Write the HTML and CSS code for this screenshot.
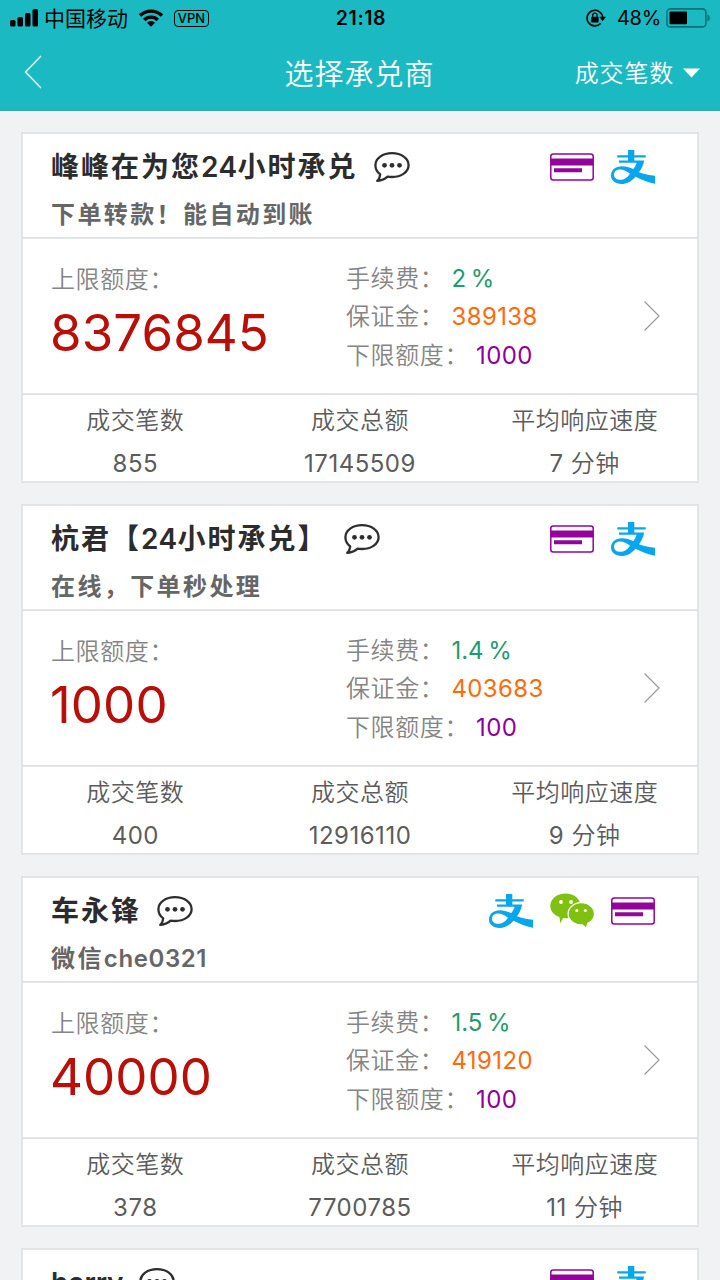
FILE: index.html
```html
<!DOCTYPE html>
<html lang="zh-CN">
<head>
<meta charset="utf-8">
<meta name="viewport" content="width=720">
<title>选择承兑商</title>
<link rel="stylesheet" href="styles.css">
</head>
<body>
<svg class="defs" width="0" height="0" aria-hidden="true">
  <symbol id="chat" viewBox="0 0 36 30">
    <path d="M18 1.2C27.3 1.2 34.6 6.5 34.6 13.2S27.3 25 18 25c-1.500 0-3-.1-4.400-.4C11 27 7.500 28.500 3.300 28.900c1.700-1.700 2.700-3.900 2.900-6.600C3.200 20 1.400 16.800 1.400 13.200 1.400 6.500 8.700 1.200 18 1.200Z" fill="none" stroke="#2e2e2e" stroke-width="2.300" stroke-linejoin="round"/>
    <circle cx="10.500" cy="13.300" r="2.400" fill="#2e2e2e"/><circle cx="18" cy="13.300" r="2.400" fill="#2e2e2e"/><circle cx="25.500" cy="13.300" r="2.400" fill="#2e2e2e"/>
  </symbol>
  <symbol id="card" viewBox="0 0 44 36">
    <rect x=".8" y="4.900" width="42.400" height="26" rx="2.500" fill="#fff" stroke="#93049b" stroke-width="1.500"/>
    <path d="M1 9.500h42v7H1zM4 19.200h28v4H4z" fill="#93049b"/>
  </symbol>
  <symbol id="alipay" viewBox="0 0 44 36">
    <path fill="#08a6ed" d="M17 1h6.300v5.300H34.700v2.200H23.300v2.900h9.900c-1 4.800-2.700 8.500-5.200 11.800 5 2 10.200 3 16 3.500v8C36.500 33.500 30 30.500 24.500 27.700 20.500 32.400 15.600 35 10.500 35 4.200 35 0 31.400 0 26.500c0-5.700 4.600-9.300 10.800-9.300 4.300 0 7.900 1.300 11.600 2.900 1.500-1.900 2.600-4 3.300-6.300H8v-2.400h9V8.500H6.300V6.300H17ZM19 24.800C15.800 22.600 12.500 20.600 9 20.600c-3.800 0-6 2.400-6 5.300 0 3 2.800 4.900 6.500 4.900 3.500 0 6.800-2 9.500-6Z"/>
  </symbol>
  <symbol id="wechat" viewBox="0 0 44 36">
    <path fill="#80c010" d="M15.500.5C24 .5 30.500 6 30.500 12.900S24 25.300 15.500 25.300c-.8 0-1.600-.1-2.400-.2L10.300 30.300 9.400 24.100C4 22 .3 17.800.3 12.900.3 6 7 .5 15.500.5Z"/>
    <path fill="#80c010" stroke="#fff" stroke-width="1.300" d="M31.300 9.700c7.300 0 13.200 4.900 13.200 11.100 0 4.100-2.700 7.700-6.600 9.600L36.300 35.500l-4-3.600h-1c-7.300 0-13.200-4.900-13.200-11.100S24 9.700 31.300 9.700Z"/>
    <g fill="#fff"><circle cx="11" cy="9" r="1.900"/><circle cx="21" cy="9" r="1.900"/><circle cx="26.800" cy="17.500" r="1.500"/><circle cx="35.300" cy="17.500" r="1.500"/></g>
  </symbol>
</svg>
<header class="top">
  <div class="status">
    <div class="status-left">
      <svg width="28" height="18" viewBox="0 0 28 18"><rect x="0" y="11" width="5.500" height="6.500" rx="1.500"/><rect x="7.500" y="8" width="5.500" height="9.500" rx="1.500"/><rect x="15" y="4" width="5.500" height="13.500" rx="1.500"/><rect x="22.500" y="0" width="5.500" height="17.500" rx="1.500"/></svg>
      <span class="carrier">中国移动</span>
      <svg class="wifi" width="24" height="18" viewBox="0 0 24 18"><g fill="none" stroke="#000" stroke-width="3.400"><path d="M1 6.500C7.200.6 16.800.6 23 6.500"/><path d="M5.200 10.900C9.100 7.200 14.900 7.200 18.800 10.900"/></g><path d="M8 13.700c2.300-2.200 5.700-2.200 8 0L12 17.800Z"/></svg>
      <span class="vpn">VPN</span>
    </div>
    <div class="clock">21:18</div>
    <div class="status-right">
      <svg width="20" height="18" viewBox="0 0 20 18"><path d="M16.700 8.500A7.800 7.800 0 1 0 14.800 14.200" fill="none" stroke="#000" stroke-width="1.600"/><path d="M13.300 7.800h6.600l-3.300 4.400Z"/><rect x="5.200" y="7.700" width="7.400" height="5.700" rx=".7"/><path d="M6.700 8V6.300a2.200 2.200 0 0 1 4.400 0V8" fill="none" stroke="#000" stroke-width="1.300"/></svg>
      <span class="percent">48%</span>
      <svg width="44" height="20" viewBox="0 0 44 20"><rect x=".9" y=".9" width="39" height="18" rx="3.500" fill="none" stroke="#08717a" stroke-width="1.600"/><rect x="3.500" y="3.500" width="17.500" height="12.800" rx="1"/><path d="M41.500 6.500c3 1 3 6 0 7Z" fill="#08717a"/></svg>
    </div>
  </div>
  <nav class="nav">
    <svg class="back" width="18" height="34" viewBox="0 0 18 34"><path d="M17 1 1.500 17 17 33" fill="none" stroke="#e5ffff" stroke-width="1.500"/></svg>
    <h1 class="title">选择承兑商</h1>
    <div class="sort"><span>成交笔数</span><svg width="17" height="10" viewBox="0 0 17 10"><path d="M0 .5h17L8.500 9.500Z" fill="#fff"/></svg></div>
  </nav>
</header>
<main class="list">
  <article class="merchant">
    <div class="head">
      <div class="who"><div class="name"><span>峰峰在为您<i>24</i>小时承兑</span><svg class="chat"><use href="#chat"/></svg></div><div class="note">下单转款！能自动到账</div></div>
      <div class="pays"><svg><use href="#card"/></svg><svg><use href="#alipay"/></svg></div>
    </div>
    <div class="detail">
      <div class="limit"><div class="label">上限额度：</div><div class="amount">8376845</div></div>
      <div class="terms"><div><span class="label">手续费：</span><b class="fee">2 %</b></div><div><span class="label">保证金：</span><b class="deposit">389138</b></div><div><span class="label">下限额度：</span><b class="min">1000</b></div></div>
      <svg class="go" viewBox="0 0 16 30"><path d="M.5.5 15 15 .5 29.500"/></svg>
    </div>
    <div class="stats"><div><span>成交笔数</span><span><i>855</i></span></div><div><span>成交总额</span><span><i>17145509</i></span></div><div><span>平均响应速度</span><span><i>7</i> 分钟</span></div></div>
  </article>
  <article class="merchant">
    <div class="head">
      <div class="who"><div class="name"><span>杭君【<i>24</i>小时承兑】</span><svg class="chat"><use href="#chat"/></svg></div><div class="note">在线，下单秒处理</div></div>
      <div class="pays"><svg><use href="#card"/></svg><svg><use href="#alipay"/></svg></div>
    </div>
    <div class="detail">
      <div class="limit"><div class="label">上限额度：</div><div class="amount">1000</div></div>
      <div class="terms"><div><span class="label">手续费：</span><b class="fee">1.4 %</b></div><div><span class="label">保证金：</span><b class="deposit">403683</b></div><div><span class="label">下限额度：</span><b class="min">100</b></div></div>
      <svg class="go" viewBox="0 0 16 30"><path d="M.5.5 15 15 .5 29.500"/></svg>
    </div>
    <div class="stats"><div><span>成交笔数</span><span><i>400</i></span></div><div><span>成交总额</span><span><i>12916110</i></span></div><div><span>平均响应速度</span><span><i>9</i> 分钟</span></div></div>
  </article>
  <article class="merchant">
    <div class="head">
      <div class="who"><div class="name"><span>车永锋</span><svg class="chat"><use href="#chat"/></svg></div><div class="note">微信<i>che0321</i></div></div>
      <div class="pays"><svg><use href="#alipay"/></svg><svg><use href="#wechat"/></svg><svg><use href="#card"/></svg></div>
    </div>
    <div class="detail">
      <div class="limit"><div class="label">上限额度：</div><div class="amount">40000</div></div>
      <div class="terms"><div><span class="label">手续费：</span><b class="fee">1.5 %</b></div><div><span class="label">保证金：</span><b class="deposit">419120</b></div><div><span class="label">下限额度：</span><b class="min">100</b></div></div>
      <svg class="go" viewBox="0 0 16 30"><path d="M.5.5 15 15 .5 29.500"/></svg>
    </div>
    <div class="stats"><div><span>成交笔数</span><span><i>378</i></span></div><div><span>成交总额</span><span><i>7700785</i></span></div><div><span>平均响应速度</span><span><i>11</i> 分钟</span></div></div>
  </article>
  <article class="merchant">
    <div class="head">
      <div class="who"><div class="name"><span><i class="tight">horry</i></span><svg class="chat"><use href="#chat"/></svg></div></div>
      <div class="pays"><svg><use href="#card"/></svg><svg><use href="#alipay"/></svg></div>
    </div>
  </article>
</main>
</body>
</html>
```
FILE: styles.css
```css
* { box-sizing: border-box; }
html { overflow: hidden; }
body {
  margin: 0;
  height: 1280px;
  overflow: hidden;
  background: #f1f2f4;
  font-family: Inter, "Noto Sans CJK SC", sans-serif;
  color: #5c5c5c;
}
svg { display: block; flex: none; }
i { font-style: normal; }
.defs { position: absolute; }
.top { height: 111px; background: #1bbac3; border-bottom: 1px solid #39a8b0; }
.status {
  height: 36px;
  padding: 0 10px 0 10px;
  display: grid;
  grid-template-columns: 1fr auto 1fr;
  align-items: center;
  color: #000;
}
.status-left, .status-right { display: flex; align-items: center; }
.status-right { justify-content: flex-end; }
.carrier { margin-left: 6px; padding-top: 1px; font-size: 21px; line-height: 30px; }
.wifi { margin-left: 11px; margin-top: -1px; }
.vpn {
  margin-left: 11px;
  width: 35px;
  height: 17px;
  border: 1.500px solid #000;
  border-radius: 4px;
  font-size: 13px;
  font-weight: 500;
  line-height: 15px;
  text-align: center;
}
.clock { margin-left: 2px; font-size: 19.500px; font-weight: 600; letter-spacing: .6px; }
.percent { margin: 0 5px 0 11px; font-size: 20px; letter-spacing: -.3px; }
.nav {
  height: 74px;
  padding: 0 20px 0 24px;
  display: grid;
  grid-template-columns: 1fr auto 1fr;
  align-items: center;
  color: #fff;
}
.title { margin: 3px 3px 0 -2px; font-size: 29px; font-weight: 350; letter-spacing: 1px; line-height: 42px; }
.back { margin-top: -3px; }
.sort { display: flex; justify-content: flex-end; align-items: center; gap: 9px; font-size: 24px; font-weight: 350; letter-spacing: .8px; line-height: 36px; }
.sort span { margin-top: 1px; }
.list { padding: 21px 21px 0; display: flex; flex-direction: column; gap: 21px; }
.merchant { height: 351px; flex: none; background: #fff; border: 2px solid #e3e4e6; }
.merchant:last-child { height: 60px; }
.head {
  height: 105px;
  padding: 14px 42px 0 28px;
  display: flex;
  justify-content: space-between;
  border-bottom: 2px solid #e3e4e6;
}
.name { height: 38px; display: flex; align-items: center; gap: 16px; font-size: 28px; font-weight: 600; letter-spacing: 2px; color: #2c2c2c; }
.name span { line-height: 38px; }
.name i { letter-spacing: .4px; }
.name .tight { letter-spacing: -.3px; }
.chat { width: 36px; height: 30px; }
.note { margin-top: 10px; font-size: 24px; line-height: 38px; font-weight: 600; letter-spacing: 2.400px; color: #666; }
.note i { letter-spacing: .6px; }
.pays { display: flex; gap: 17px; }
.pays svg { width: 44px; height: 36px; margin-top: 1px; }
.detail {
  height: 156px;
  padding: 21px 37px 0 28px;
  display: flex;
  border-bottom: 2px solid #e3e4e6;
}
.limit { width: 295px; }
.label { font-size: 24px; line-height: 38px; font-weight: 350; letter-spacing: .6px; color: #858585; }
.limit .label { padding-top: 1px; }
.amount { margin: 2px 0 0 -1px; font-size: 51px; line-height: 64px; letter-spacing: .1px; color: #b80f08; }
.terms { flex: 1; font-size: 24px; line-height: 38px; }
.terms > div { display: flex; height: 38.300px; }
.terms b { margin-left: 7px; font-weight: 400; letter-spacing: .4px; }
.terms .fee { letter-spacing: 0; word-spacing: -2px; color: #1f9b70; }
.deposit { color: #ff6a0b; }
.min { color: #900099; }
.go { width: 16px; height: 30px; margin-top: 41px; fill: none; stroke: #999; stroke-width: 1.200; }
.stats { padding-top: 7px; display: grid; grid-template-columns: repeat(3, 1fr); }
.stats > div { display: flex; flex-direction: column; align-items: center; gap: 5px; font-size: 24px; font-weight: 350; line-height: 38px; letter-spacing: .5px; }
.stats i { font-weight: 400; }
```
